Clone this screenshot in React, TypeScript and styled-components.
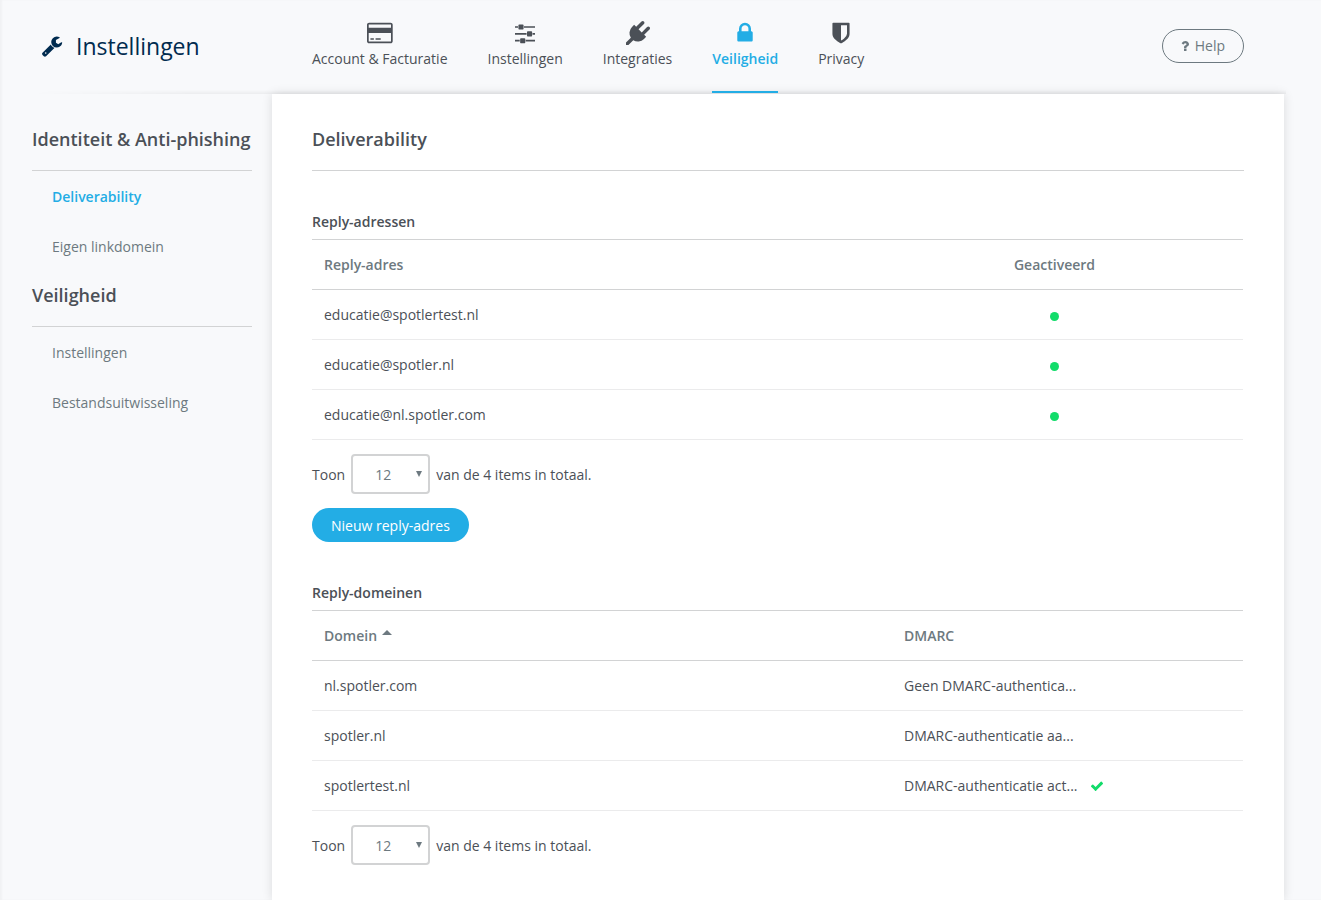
import React from "react";
import styled, { createGlobalStyle, css } from "styled-components";

const color = {
  page: "#f8f9fb",
  text: "#4b5057",
  muted: "#6d7980",
  brand: "#002b4f",
  accent: "#23ade5",
  ok: "#12dc6a",
  line: "#d2d3d4",
  rowLine: "#ebebec",
};

const GlobalStyle = createGlobalStyle`
  *, *::before, *::after { box-sizing: border-box; }
  body {
    margin: 0;
    background: ${color.page};
    color: ${color.text};
    font: 400 14px/20px "Open Sans", "Noto Sans", sans-serif;
  }
  h1, h2, h3, ul, p { margin: 0; padding: 0; }
  ul { list-style: none; }
  a { color: inherit; text-decoration: none; }
`;

const icons = {
  wrench: {
    width: 1792,
    d: "M448 1472q0-26-19-45t-45-19-45 19-19 45 19 45 45 19 45-19 19-45zm644-420l-682 682q-37 37-90 37-52 0-91-37l-106-108q-38-36-38-90 0-53 38-91l681-681q39 98 114.5 173.5t173.5 114.5zm634-435q0 39-23 106-47 134-164.5 217.5t-258.5 83.5q-185 0-316.5-131.5t-131.5-316.5 131.5-316.5 316.5-131.5q58 0 121.5 16.5t107.5 46.5q16 11 16 28t-16 28l-293 169v224l193 107q5-3 79-48.5t135.5-81 70.5-35.5q15 0 23.5 10t8.5 25z",
  },
  card: {
    width: 1920,
    d: "M1760 128q66 0 113 47t47 113v1216q0 66-47 113t-113 47h-1600q-66 0-113-47t-47-113v-1216q0-66 47-113t113-47h1600zm-1600 128q-13 0-22.5 9.5t-9.5 22.5v224h1664v-224q0-13-9.5-22.5t-22.5-9.5h-1600zm1600 1280q13 0 22.5-9.5t9.5-22.5v-608h-1664v608q0 13 9.5 22.5t22.5 9.5h1600zm-1504-128v-128h256v128h-256zm384 0v-128h384v128h-384z",
  },
  sliders: {
    width: 1536,
    d: "M352 1408v128h-352v-128h352zm352-128q26 0 45 19t19 45v256q0 26-19 45t-45 19h-256q-26 0-45-19t-19-45v-256q0-26 19-45t45-19h256zm160-384v128h-864v-128h864zm-640-512v128h-224v-128h224zm1312 1024v128h-736v-128h736zm-960-1152q26 0 45 19t19 45v256q0 26-19 45t-45 19h-256q-26 0-45-19t-19-45v-256q0-26 19-45t45-19h256zm640 512q26 0 45 19t19 45v256q0 26-19 45t-45 19h-256q-26 0-45-19t-19-45v-256q0-26 19-45t45-19h256zm320 128v128h-224v-128h224zm0-512v128h-864v-128h864z",
  },
  plug: {
    width: 1792,
    d: "M1755 453q37 38 37 90.5t-37 90.5l-401 400 150 150-160 160q-163 163-389.5 186.5t-411.5-100.5l-362 362h-181v-181l362-362q-124-185-100.5-411.5t186.5-389.5l160-160 150 150 400-401q38-37 91-37t90 37 37 90.5-37 90.5l-400 401 234 234 401-400q38-37 91-37t90 37z",
  },
  lock: {
    width: 1792,
    d: "M640 768h512v-192q0-106-75-181t-181-75-181 75-75 181v192zm832 96v576q0 40-28 68t-68 28h-960q-40 0-68-28t-28-68v-576q0-40 28-68t68-28h32v-192q0-184 132-316t316-132 316 132 132 316v192h32q40 0 68 28t28 68z",
  },
  shield: {
    width: 1792,
    d: "M1344 960v-640h-448v1137q119-63 213-137 235-184 235-360zm192-768v768q0 86-33.5 170.5t-83 150-118 127.5-126.5 103-121 77.5-89.5 49.5-42.5 20q-12 6-26 6t-26-6q-16-7-42.5-20t-89.5-49.5-121-77.5-126.5-103-118-127.5-83-150-33.5-170.5v-768q0-26 19-45t45-19h1152q26 0 45 19t19 45z",
  },
  question: {
    width: 1792,
    d: "M1088 1256v240q0 16-12 28t-28 12h-240q-16 0-28-12t-12-28v-240q0-16 12-28t28-12h240q16 0 28 12t12 28zm316-600q0 54-15.5 101t-35 76.5-55 59.5-57.5 43.5-61 35.5q-41 23-68.5 65t-27.5 67q0 17-12 32.5t-28 15.5h-240q-15 0-25.5-18.5t-10.5-37.5v-45q0-83 65-156.5t143-108.5q59-27 84-56t25-76q0-42-46.5-74t-107.5-32q-65 0-108 29-35 25-107 115-13 16-31 16-12 0-25-8l-164-125q-13-10-15.5-25t5.5-28q160-266 464-266 80 0 161 31t146 83 106 127.5 41 158.5z",
  },
  check: {
    width: 1792,
    d: "M1671 566q0 40-28 68l-724 724-136 136q-28 28-68 28t-68-28l-136-136-362-362q-28-28-28-68t28-68l136-136q28-28 68-28t68 28l294 295 656-657q28-28 68-28t68 28l136 136q28 28 28 68z",
  },
};

type IconName = keyof typeof icons;

const Glyph = styled.svg<{ $size: number }>`
  display: block;
  flex: none;
  height: ${(p) => p.$size}px;
  fill: currentColor;
`;

function Icon({ name, size }: { name: IconName; size: number }) {
  const { width, d } = icons[name];
  return (
    <Glyph $size={size} viewBox={`0 0 ${width} 1792`} aria-hidden="true">
      <path d={d} />
    </Glyph>
  );
}

const Page = styled.div`
  display: flex;
  flex-direction: column;
  min-height: 100vh;
  box-shadow: inset 2px 0 2px rgba(0, 0, 0, 0.03);
`;

const Header = styled.header`
  position: relative;
  z-index: 1;
  display: flex;
  height: 94px;
  padding: 0 77px 1px 41px;

  &::after {
    content: "";
    position: absolute;
    left: 32px;
    right: 35px;
    bottom: 0;
    height: 4px;
    background: linear-gradient(to bottom, transparent, rgba(0, 0, 0, 0.05));
    mask-image: linear-gradient(to right, transparent, #000 160px);
    pointer-events: none;
  }
`;

const Brand = styled.div`
  display: flex;
  flex: 0 0 271px;
  align-items: center;
  gap: 13px;
  padding-bottom: 1px;
  color: ${color.brand};
`;

const Title = styled.h1`
  font-size: 23px;
  font-weight: 400;
  line-height: 32px;
`;

const Tabs = styled.nav`
  display: flex;
  flex: 1;
  gap: 40px;
`;

const Tab = styled.a<{ $active?: boolean }>`
  position: relative;
  z-index: 1;
  display: flex;
  flex-direction: column;
  align-items: center;
  gap: 4px;
  padding-top: 21px;
  border-bottom: 2px solid transparent;
  white-space: nowrap;
  ${(p) =>
    p.$active &&
    css`
      color: ${color.accent};
      border-color: ${color.accent};
      font-weight: 600;
    `}
`;

const HelpButton = styled.button`
  display: flex;
  align-items: center;
  align-self: center;
  gap: 3px;
  height: 34px;
  margin-bottom: 1px;
  padding: 0 18px 0 15px;
  border: 1px solid ${color.muted};
  border-radius: 17px;
  background: transparent;
  color: ${color.muted};
  font: inherit;
  cursor: pointer;
`;

const Body = styled.div`
  display: flex;
  flex: 1;
  padding-right: 37px;
`;

const Sidebar = styled.nav`
  flex: 0 0 272px;
  padding: 22px 20px 0 32px;
`;

const GroupTitle = styled.h2`
  padding: 9px 0 17px;
  margin-bottom: 1px;
  border-bottom: 1px solid ${color.line};
  font-size: 18px;
  font-weight: 600;
  line-height: 28px;
  white-space: nowrap;
`;

const SideLink = styled.a<{ $active?: boolean }>`
  display: block;
  padding: 15px 20px;
  color: ${(p) => (p.$active ? color.accent : color.muted)};
  font-weight: ${(p) => (p.$active ? 600 : 400)};
`;

const Panel = styled.main`
  flex: 1;
  min-width: 0;
  padding: 22px 40px 35px;
  background: #fff;
  box-shadow: 0 0 10px rgba(0, 0, 0, 0.12);
`;

const Section = styled.section`
  margin-top: 40px;
`;

const SectionTitle = styled.h3`
  padding-bottom: 6px;
  font-size: 14px;
  font-weight: 600;
  line-height: 22px;
`;

const Table = styled.table`
  width: calc(100% - 1px);
  table-layout: fixed;
  border-spacing: 0;
  border-top: 1px solid ${color.line};
`;

const HeadCell = styled.th<{ $width?: number; $center?: boolean }>`
  width: ${(p) => (p.$width ? `${p.$width}px` : "auto")};
  height: 50px;
  padding: 0 12px;
  border-bottom: 1px solid ${color.line};
  color: ${color.muted};
  font-weight: 600;
  text-align: ${(p) => (p.$center ? "center" : "left")};
`;

const Cell = styled.td<{ $center?: boolean }>`
  height: 50px;
  padding: 0 12px;
  border-bottom: 1px solid ${color.rowLine};
  text-align: ${(p) => (p.$center ? "center" : "left")};
`;

const Dot = styled.span`
  display: block;
  width: 9px;
  height: 9px;
  margin: 3px auto 0;
  border-radius: 50%;
  background: ${color.ok};
`;

const SortButton = styled.button`
  display: flex;
  align-items: center;
  gap: 5px;
  padding: 0;
  border: 0;
  background: none;
  color: inherit;
  font: inherit;
  cursor: pointer;
`;

const SortArrow = styled.svg`
  width: 10px;
  height: 5px;
  margin-bottom: 6px;
  fill: currentColor;
`;

const Status = styled.div`
  display: flex;
  align-items: center;
  gap: 12px;
  color: ${color.text};

  svg {
    color: ${color.ok};
  }
`;

const Pager = styled.label`
  display: flex;
  align-items: center;
  gap: 6px;
  margin-top: 14px;
`;

const PagerText = styled.span`
  padding-top: 2px;
`;

const SelectBox = styled.span`
  position: relative;
  display: block;
`;

const Select = styled.select`
  display: block;
  width: 79px;
  height: 40px;
  padding: 2px 22px 0;
  border: 2px solid ${color.line};
  border-radius: 4px;
  appearance: none;
  background: #fff;
  color: ${color.muted};
  font: inherit;
`;

const SelectArrow = styled.svg`
  position: absolute;
  top: 17px;
  right: 8px;
  width: 6px;
  height: 6px;
  fill: ${color.muted};
  pointer-events: none;
`;

const PrimaryButton = styled.button`
  display: block;
  height: 34px;
  margin-top: 14px;
  padding: 2px 19px 0;
  border: 0;
  border-radius: 17px;
  background: ${color.accent};
  color: #fff;
  font: inherit;
  cursor: pointer;
`;

const tabs: { icon: IconName; label: string; active?: boolean }[] = [
  { icon: "card", label: "Account & Facturatie" },
  { icon: "sliders", label: "Instellingen" },
  { icon: "plug", label: "Integraties" },
  { icon: "lock", label: "Veiligheid", active: true },
  { icon: "shield", label: "Privacy" },
];

const groups = [
  { title: "Identiteit & Anti-phishing", links: ["Deliverability", "Eigen linkdomein"] },
  { title: "Veiligheid", links: ["Instellingen", "Bestandsuitwisseling"] },
];

const addresses = ["educatie@spotlertest.nl", "educatie@spotler.nl", "educatie@nl.spotler.com"];

const domains = [
  { name: "nl.spotler.com", dmarc: "Geen DMARC-authentica...", verified: false },
  { name: "spotler.nl", dmarc: "DMARC-authenticatie aa...", verified: false },
  { name: "spotlertest.nl", dmarc: "DMARC-authenticatie act...", verified: true },
];

function PageSize() {
  return (
    <Pager>
      <PagerText>Toon</PagerText>
      <SelectBox>
        <Select defaultValue="12">
          <option>12</option>
          <option>24</option>
          <option>48</option>
        </Select>
        <SelectArrow viewBox="0 0 6 6" aria-hidden="true">
          <path d="M0 0h6L3 6z" />
        </SelectArrow>
      </SelectBox>
      <PagerText>van de 4 items in totaal.</PagerText>
    </Pager>
  );
}

export default function App() {
  return (
    <>
      <GlobalStyle />
      <Page>
        <Header>
          <Brand>
            <Icon name="wrench" size={22} />
            <Title>Instellingen</Title>
          </Brand>
          <Tabs>
            {tabs.map((tab) => (
              <Tab key={tab.label} href="#" $active={tab.active}>
                <Icon name={tab.icon} size={24} />
                {tab.label}
              </Tab>
            ))}
          </Tabs>
          <HelpButton type="button">
            <Icon name="question" size={14} />
            Help
          </HelpButton>
        </Header>
        <Body>
          <Sidebar>
            {groups.map((group) => (
              <React.Fragment key={group.title}>
                <GroupTitle>{group.title}</GroupTitle>
                <ul>
                  {group.links.map((link) => (
                    <li key={link}>
                      <SideLink href="#" $active={link === "Deliverability"}>
                        {link}
                      </SideLink>
                    </li>
                  ))}
                </ul>
              </React.Fragment>
            ))}
          </Sidebar>
          <Panel>
            <GroupTitle>Deliverability</GroupTitle>
            <Section>
              <SectionTitle>Reply-adressen</SectionTitle>
              <Table>
                <thead>
                  <tr>
                    <HeadCell>Reply-adres</HeadCell>
                    <HeadCell $width={377} $center>
                      Geactiveerd
                    </HeadCell>
                  </tr>
                </thead>
                <tbody>
                  {addresses.map((address) => (
                    <tr key={address}>
                      <Cell>{address}</Cell>
                      <Cell $center>
                        <Dot role="img" aria-label="Geactiveerd" />
                      </Cell>
                    </tr>
                  ))}
                </tbody>
              </Table>
              <PageSize />
              <PrimaryButton type="button">Nieuw reply-adres</PrimaryButton>
            </Section>
            <Section>
              <SectionTitle>Reply-domeinen</SectionTitle>
              <Table>
                <thead>
                  <tr>
                    <HeadCell aria-sort="ascending">
                      <SortButton type="button">
                        Domein
                        <SortArrow viewBox="0 0 10 5" aria-hidden="true">
                          <path d="M0 5L5 0l5 5z" />
                        </SortArrow>
                      </SortButton>
                    </HeadCell>
                    <HeadCell $width={351}>DMARC</HeadCell>
                  </tr>
                </thead>
                <tbody>
                  {domains.map((domain) => (
                    <tr key={domain.name}>
                      <Cell>{domain.name}</Cell>
                      <Cell>
                        <Status>
                          {domain.dmarc}
                          {domain.verified && <Icon name="check" size={14} />}
                        </Status>
                      </Cell>
                    </tr>
                  ))}
                </tbody>
              </Table>
              <PageSize />
            </Section>
          </Panel>
        </Body>
      </Page>
    </>
  );
}
